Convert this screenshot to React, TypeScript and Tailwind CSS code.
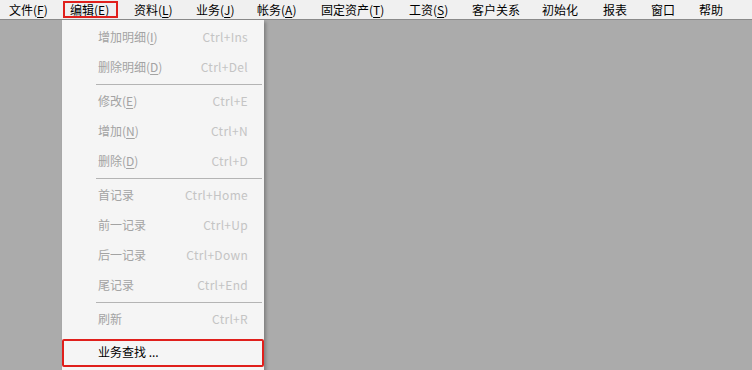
import React from "react";

const font = { fontFamily: '"Noto Sans CJK SC", "Noto Sans", sans-serif' };

function Acc({ label, k }: { label: string; k?: string }) {
  if (!k) return <span>{label}</span>;
  return (
    <span>
      {label}(<span className="underline underline-offset-2">{k}</span>)
    </span>
  );
}

const bar: { label: string; k?: string; w: string }[] = [
  { label: "文件", k: "F", w: "w-[61px]" },
  { label: "编辑", k: "E", w: "w-[64px]" },
  { label: "资料", k: "L", w: "w-[62px]" },
  { label: "业务", k: "J", w: "w-[61px]" },
  { label: "帐务", k: "A", w: "w-[64px]" },
  { label: "固定资产", k: "T", w: "w-[88px]" },
  { label: "工资", k: "S", w: "w-[63px]" },
  { label: "客户关系", w: "w-[70px]" },
  { label: "初始化", w: "w-[61px]" },
  { label: "报表", w: "w-[48px]" },
  { label: "窗口", w: "w-[48px]" },
  { label: "帮助", w: "w-[40px]" },
];

type Item = { label: string; k?: string; sc: string } | "sep";
const items: Item[] = [
  { label: "增加明细", k: "I", sc: "Ctrl+Ins" },
  { label: "删除明细", k: "D", sc: "Ctrl+Del" },
  "sep",
  { label: "修改", k: "E", sc: "Ctrl+E" },
  { label: "增加", k: "N", sc: "Ctrl+N" },
  { label: "删除", k: "D", sc: "Ctrl+D" },
  "sep",
  { label: "首记录", sc: "Ctrl+Home" },
  { label: "前一记录", sc: "Ctrl+Up" },
  { label: "后一记录", sc: "Ctrl+Down" },
  { label: "尾记录", sc: "Ctrl+End" },
  "sep",
  { label: "刷新", sc: "Ctrl+R" },
];

export default function App() {
  return (
    <div className="w-[752px] h-[370px] overflow-hidden bg-[#ababab] flex flex-col text-[12px]" style={font}>
      <div className="h-[20px] bg-[#f0f0f0] border-b border-[#8a8a8a] flex items-center pl-[9px] text-black shrink-0">
        {bar.map((b, i) => (
          <div key={i} className={`${b.w} shrink-0 relative whitespace-nowrap leading-[19px]`}>
            {i === 1 && (
              <div className="absolute left-[-7px] top-[1px] w-[55px] h-[17px] border-2 border-[#e0201c]" />
            )}
            <Acc label={b.label} k={b.k} />
          </div>
        ))}
      </div>
      <div className="flex-1 pl-[62px]">
        <div className="w-[202px] bg-[#f5f5f5] shadow-[2px_2px_3px_rgba(0,0,0,0.25)] pt-[2px] flex flex-col">
          {items.map((it, i) =>
            it === "sep" ? (
              <div key={i} className="h-[4px] flex items-center pl-[34px] pr-[2px]">
                <div className="h-[1px] w-full bg-[#b4b4b4]" />
              </div>
            ) : (
              <div key={i} className="h-[30px] flex items-center pl-[36px] pr-[16px] justify-between text-[#a3a3a3]">
                <span className="whitespace-nowrap">
                  <Acc label={it.label} k={it.k} />
                </span>
                <span className="text-[#c4c4c4] whitespace-nowrap tracking-[0.3px]">{it.sc}</span>
              </div>
            )
          )}
          <div className="mt-[3px] h-[30px] relative flex items-center pl-[36px] text-black">
            <div className="absolute left-0 right-0 top-[2px] h-[28px] border-2 border-[#e0201c] rounded-[2px]" />
            <span className="whitespace-nowrap">业务查找 ...</span>
          </div>
          <div className="h-[10px]" />
        </div>
      </div>
    </div>
  );
}
